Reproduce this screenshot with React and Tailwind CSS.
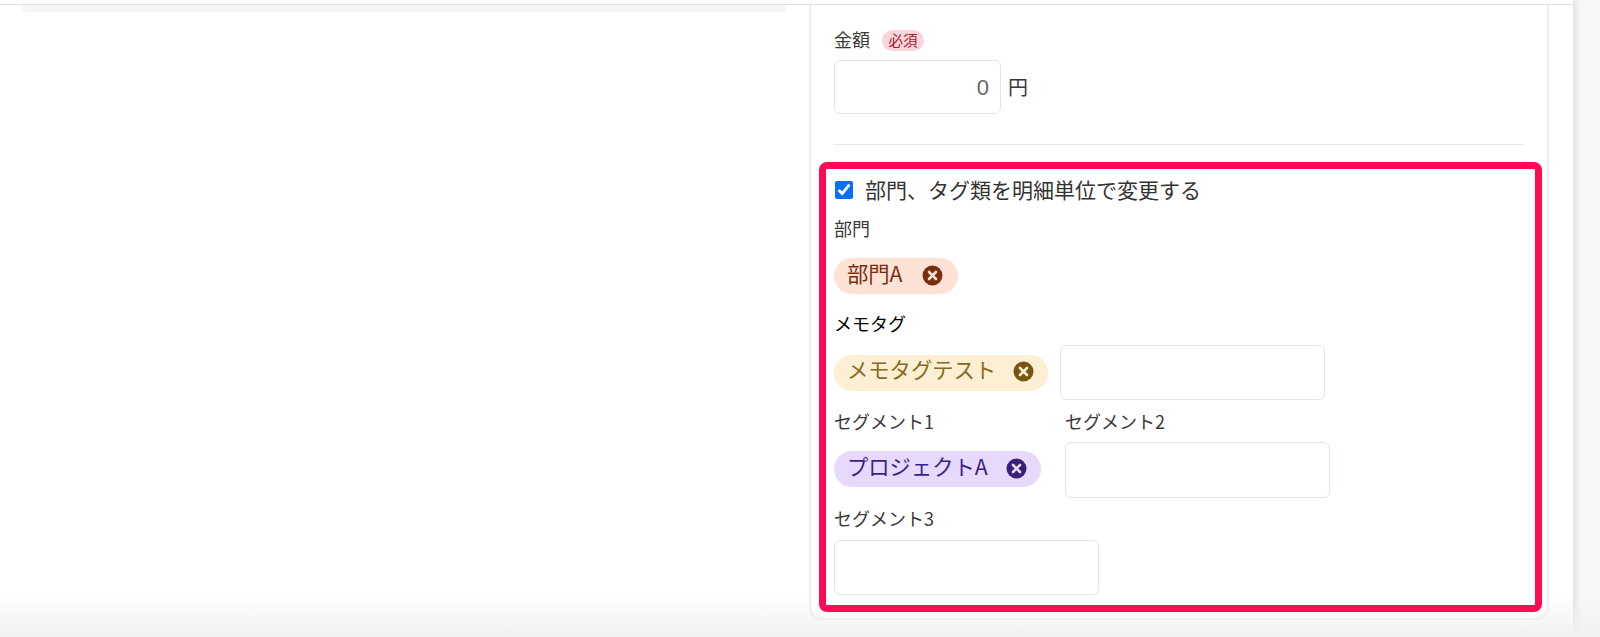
import React from "react";

const font = { fontFamily: '"Noto Sans CJK JP", "Liberation Sans", sans-serif' };

function CloseIcon({ color, fill }) {
  return (
    <svg width="21" height="21" viewBox="0 0 21 21" className="shrink-0">
      <circle cx="10.5" cy="10.5" r="10" fill={color} />
      <path d="M7 7 L14 14 M14 7 L7 14" stroke={fill} strokeWidth="2.6" strokeLinecap="round" />
    </svg>
  );
}

function Chip({ label, width, bg, text, icon, iconFill, gap }) {
  return (
    <div className={`flex h-[36px] items-center rounded-full pl-[13px] ${width} ${bg} ${text}`}>
      <span className="pb-[7px] whitespace-nowrap text-[21.3px] leading-none">{label}</span>
      <span className={`pb-[2px] ${gap}`}>
        <CloseIcon color={icon} fill={iconFill} />
      </span>
    </div>
  );
}

function Field({ className = "" }) {
  return <div className={`h-[56px] w-[265px] shrink-0 rounded-[6px] border-[1.5px] border-[#e8e4dd] bg-white ${className}`} />;
}

function Label({ children, className = "" }) {
  return <div className={`h-[20px] whitespace-nowrap text-[18px] leading-[18px] text-[#3a3a3a] ${className}`}>{children}</div>;
}

export default function App() {
  return (
    <div style={font} className="relative h-[637px] w-[1600px] overflow-hidden bg-[#f8f8f8]">
      <div className="flex h-full w-[1573px] items-start bg-white pt-[4px] shadow-[2px_0_8px_rgba(0,0,0,0.12)]">
        <div className="flex w-full flex-col">
          <div className="h-px w-full bg-[#e2e2e2]" />
          <div className="flex">
            <div className="w-[809px] shrink-0 pl-[22px]">
              <div className="h-[7px] w-[764px] bg-[#f7f5f5]" />
            </div>
            <div className="h-[615px] w-[740px] shrink-0 rounded-b-[12px] border-x-2 border-b-2 border-[#eeeeee] bg-white pl-[8px] pr-[5px]">
              <div className="pl-[15px] pr-[18px] pt-[24px]">
                <div className="flex h-[22px] items-center">
                  <span className="-mt-[2px] text-[18px] leading-none text-[#3a3a3a]">金額</span>
                  <span className="ml-[12px] flex h-[21px] w-[42px] items-center justify-center rounded-full bg-[#fbd5dc] text-[14.5px] leading-none text-[#9b1c31]">必須</span>
                </div>
                <div className="mt-[9px] flex items-center">
                  <div className="flex h-[54px] w-[167px] items-center justify-end rounded-[6px] border-[1.5px] border-[#e8e4dd] pr-[11px] font-['Liberation_Sans'] text-[22px] text-[#666666]">0</div>
                  <span className="ml-[7px] text-[20px] leading-none text-[#3a3a3a]">円</span>
                </div>
                <div className="mt-[30px] h-px w-full bg-[#e8e8e8]" />
              </div>
              <div className="relative z-10 mt-[17px] h-[450px] w-[723px] rounded-[8px] border-[7px] border-[#ff0a54] bg-white pl-[8px]">
                <div className="flex h-[42px] items-center">
                  <input type="checkbox" defaultChecked readOnly className="ml-px h-[18px] w-[18px] accent-[#0b6ef6]" />
                  <span className="-mt-px ml-[12px] whitespace-nowrap text-[21px] leading-none text-[#333333]">部門、タグ類を明細単位で変更する</span>
                </div>
                <Label className="mt-[8px]">部門</Label>
                <div className="mt-[19px]">
                  <Chip label="部門A" width="w-[124px]" bg="bg-[#fee2d6]" text="text-[#7a2e0e]" icon="#7a2e0e" iconFill="#fee2d6" gap="ml-[19px] flex" />
                </div>
                <Label className="mt-[20px] !text-black">メモタグ</Label>
                <div className="mt-[11px] flex h-[55px] items-center gap-[12px]">
                  <Chip label="メモタグテスト" width="w-[214px]" bg="bg-[#fdefd3]" text="text-[#8a6a20]" icon="#7a5510" iconFill="#fdefd3" gap="ml-[17px] flex" />
                  <Field className="!h-[55px]" />
                </div>
                <div className="mt-[12px] flex">
                  <div className="w-[231px] shrink-0">
                    <Label>セグメント1</Label>
                    <div className="mt-[19px]">
                      <Chip label="プロジェクトA" width="w-[207px]" bg="bg-[#e7d9fb]" text="text-[#3b1e8a]" icon="#3b1e7a" iconFill="#e7d9fb" gap="ml-[18px] flex" />
                    </div>
                  </div>
                  <div className="flex flex-col">
                    <Label>セグメント2</Label>
                    <Field className="mt-[10px]" />
                  </div>
                </div>
                <Label className="mt-[11px]">セグメント3</Label>
                <Field className="mt-[11px] !h-[55px]" />
              </div>
            </div>
          </div>
        </div>
      </div>
      <div className="pointer-events-none absolute inset-x-0 bottom-0 h-[40px] bg-gradient-to-b from-transparent to-[#f1f1f1]" />
    </div>
  );
}
